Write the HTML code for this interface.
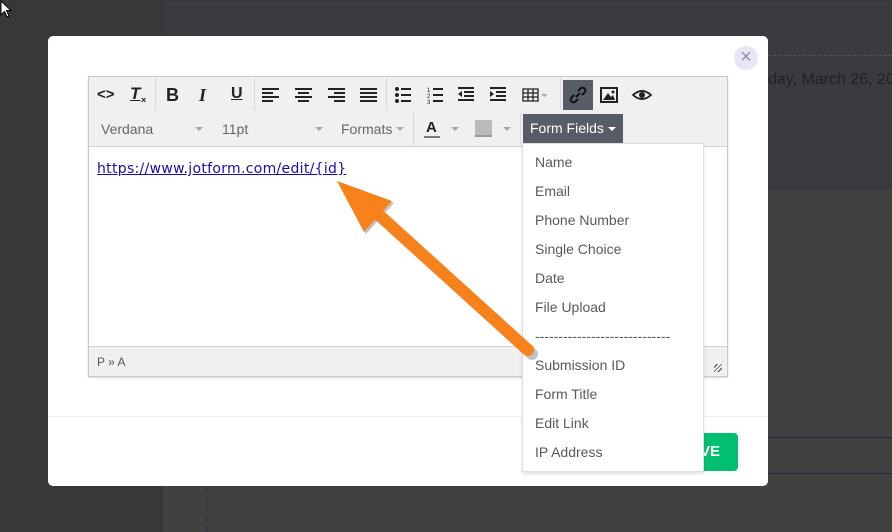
<!DOCTYPE html>
<html><head><meta charset="utf-8"><style>
*{margin:0;padding:0;box-sizing:border-box}
body{width:892px;height:532px;overflow:hidden;background:#383838;position:relative;font-family:"Liberation Sans",Arial,sans-serif}
.a{position:absolute}
.dd{color:#666;font-size:14px}
.item{position:absolute;left:12px;font-size:14px;color:#595959;white-space:nowrap}
.car{position:absolute;width:0;height:0;border-left:4px solid transparent;border-right:4px solid transparent;border-top:4px solid #aaa}
</style></head><body>
<div class="a" style="left:163px;top:1px;width:729px;height:189px;background:#3b3a3f"></div>
<div class="a" style="left:163px;top:190px;width:729px;height:342px;background:#414141"></div>
<div class="a" style="left:768px;top:55px;width:124px;border-top:1px dashed #4a5660"></div>
<div class="a" style="left:768px;top:71px;font-size:16px;color:#222;white-space:nowrap">day, March 26, 2020</div>
<div class="a" style="left:768px;top:437px;width:124px;border-top:1px solid #1f2a44"></div>
<div class="a" style="left:768px;top:473px;width:124px;border-top:1px solid #1f2a44"></div>
<div class="a" style="left:206px;top:486px;height:46px;border-left:2px dashed #333a44"></div>
<svg class="a" style="left:0;top:0" width="14" height="20"><path d="M1 1 L1 15 L4.5 11.5 L7 17 L9 16 L6.5 10.5 L11 10.5 Z" fill="#fff" stroke="#000" stroke-width="1"/></svg>

<div class="a" style="left:48px;top:36px;width:720px;height:450px;background:#fff;border-radius:5px"></div>
<div class="a" style="left:734px;top:46px;width:24px;height:24px;border-radius:50%;background:#e6e7f2;color:#8d93b0;font-size:20px;line-height:23px;text-align:center">×</div>
<div class="a" style="left:48px;top:416px;width:720px;border-top:1px solid #eee"></div>
<div class="a" style="left:640px;top:433px;width:98px;height:38px;background:#00c06f;border-radius:4px;color:#fff;font-weight:bold;font-size:15px;line-height:38px;text-align:right;padding-right:18px">SAVE</div>

<div class="a" style="left:88px;top:76px;width:640px;height:301px;border:1px solid #c9c9c9;background:#f0f0f0;box-shadow:0 1px 2px rgba(0,0,0,.15)"></div>
<div class="a" style="left:89px;top:146px;width:638px;height:201px;background:#fff;border-top:1px solid #d0d0d0;border-bottom:1px solid #d0d0d0"></div>
<div class="a" style="left:97px;top:355px;font-size:12px;color:#555">P » A</div>
<div class="a" style="left:714px;top:364px;width:8px;height:8px;background:repeating-linear-gradient(135deg,transparent 0 2px,#444 2px 3px)"></div>
<div class="a" style="left:155px;top:78px;height:32px;border-left:1px solid #d9d9d9"></div>
<div class="a" style="left:254px;top:78px;height:32px;border-left:1px solid #d9d9d9"></div>
<div class="a" style="left:386px;top:78px;height:32px;border-left:1px solid #d9d9d9"></div>
<div class="a" style="left:560px;top:78px;height:32px;border-left:1px solid #d9d9d9"></div>
<div class="a" style="left:413px;top:113px;height:32px;border-left:1px solid #d9d9d9"></div>
<div class="a" style="left:520px;top:113px;height:32px;border-left:1px solid #d9d9d9"></div>

<div class="a" style="left:97px;top:86px;font-size:15px;font-weight:bold;color:#222">&lt;&gt;</div>
<div class="a" style="left:130px;top:84px;font-size:17px;font-style:italic;font-weight:bold;color:#222;text-decoration:underline">T</div><div class="a" style="left:141px;top:95px;font-size:9px;font-weight:bold;color:#222">×</div>
<div class="a" style="left:166px;top:85px;font-size:18px;font-weight:bold;color:#222">B</div>
<div class="a" style="left:199px;top:85px;font-size:18px;font-style:italic;font-weight:bold;color:#222;font-family:'Liberation Serif',serif">I</div>
<div class="a" style="left:231px;top:85px;font-size:16px;font-weight:bold;color:#222;text-decoration:underline">U</div>
<svg class="a" style="left:262px;top:87px" width="120" height="16" fill="#222">
<rect x="0" y="1" width="17" height="2"/><rect x="0" y="5" width="11" height="2"/><rect x="0" y="9" width="17" height="2"/><rect x="0" y="13" width="11" height="2"/>
<rect x="33" y="1" width="17" height="2"/><rect x="36" y="5" width="11" height="2"/><rect x="33" y="9" width="17" height="2"/><rect x="36" y="13" width="11" height="2"/>
<rect x="66" y="1" width="17" height="2"/><rect x="72" y="5" width="11" height="2"/><rect x="66" y="9" width="17" height="2"/><rect x="72" y="13" width="11" height="2"/>
<rect x="98" y="1" width="17" height="2"/><rect x="98" y="5" width="17" height="2"/><rect x="98" y="9" width="17" height="2"/><rect x="98" y="13" width="17" height="2"/>
</svg>
<svg class="a" style="left:394px;top:86px" width="160" height="18" fill="#222">
<circle cx="3" cy="3" r="2"/><circle cx="3" cy="9" r="2"/><circle cx="3" cy="15" r="2"/><rect x="7" y="2" width="10" height="2"/><rect x="7" y="8" width="10" height="2"/><rect x="7" y="14" width="10" height="2"/>
<text x="33" y="6" font-size="6" font-family="Liberation Sans">1</text><text x="33" y="12" font-size="6">2</text><text x="33" y="18" font-size="6">3</text><rect x="39" y="2" width="10" height="2"/><rect x="39" y="8" width="10" height="2"/><rect x="39" y="14" width="10" height="2"/>
<rect x="64" y="1" width="16" height="2"/><rect x="70" y="5" width="10" height="2"/><rect x="70" y="9" width="10" height="2"/><rect x="64" y="13" width="16" height="2"/><path d="M64 8 L68 5 L68 11Z"/>
<rect x="96" y="1" width="16" height="2"/><rect x="102" y="5" width="10" height="2"/><rect x="102" y="9" width="10" height="2"/><rect x="96" y="13" width="16" height="2"/><path d="M100 8 L96 5 L96 11Z"/>
<path d="M129 3h15v12h-15z M129 7h15 M129 11h15 M134 3v12 M139 3v12" fill="none" stroke="#222" stroke-width="1.3"/>
<path d="M147 8h7l-3.5 3z" fill="#aaa"/>
</svg>
<div class="a" style="left:563px;top:80px;width:30px;height:30px;background:#575d67"></div>
<svg class="a" style="left:568px;top:85px" width="20" height="20"><path d="M8 12 L12 8 M6 10 L3.5 12.5 a2.5 2.5 0 0 0 4 4 L10 14 M10 6 L12.5 3.5 a2.5 2.5 0 0 1 4 4 L14 10" stroke="#111" stroke-width="2" fill="none"/></svg>
<svg class="a" style="left:600px;top:87px" width="60" height="16"><rect x="1" y="1" width="16" height="14" fill="none" stroke="#222" stroke-width="2"/><path d="M3 13 L8 6 L11 10 L13 8 L15 13Z" fill="#222"/><circle cx="13" cy="5" r="1.5" fill="#222"/>
<path d="M33 8 Q42 0 51 8 Q42 16 33 8Z" fill="none" stroke="#222" stroke-width="1.8"/><circle cx="42" cy="8" r="3" fill="#222"/></svg>

<div class="a dd" style="left:101px;top:121px">Verdana</div><div class="car" style="left:195px;top:127px"></div>
<div class="a dd" style="left:222px;top:121px">11pt</div><div class="car" style="left:315px;top:127px"></div>
<div class="a dd" style="left:341px;top:121px">Formats</div><div class="car" style="left:396px;top:127px"></div>
<div class="a" style="left:426px;top:119px;font-size:15px;font-weight:bold;color:#222">A</div><div class="a" style="left:424px;top:136px;width:16px;height:2px;background:#777"></div><div class="car" style="left:451px;top:127px"></div>
<div class="a" style="left:475px;top:120px;width:17px;height:17px;background:#bbb;border-bottom:2px solid #999"></div><div class="car" style="left:503px;top:127px"></div>
<div class="a" style="left:523px;top:114px;width:100px;height:29px;background:#575d67;color:#fff;font-size:14px;line-height:29px;padding-left:7px">Form Fields</div>
<div class="car" style="left:608px;top:127px;border-top-color:#fff"></div>

<div class="a" style="left:97px;top:161px;font-family:'DejaVu Sans',Verdana,sans-serif;font-size:14px;color:#1a0dab;text-decoration:underline;letter-spacing:0.3px;white-space:nowrap">https://www.jotform.com/edit/{id}</div>

<div class="a" style="left:522px;top:143px;width:182px;height:329px;background:#fff;border:1px solid #ddd;box-shadow:0 2px 3px rgba(0,0,0,.12)">
<div class="item" style="top:10px">Name</div>
<div class="item" style="top:39px">Email</div>
<div class="item" style="top:68px">Phone Number</div>
<div class="item" style="top:97px">Single Choice</div>
<div class="item" style="top:126px">Date</div>
<div class="item" style="top:155px">File Upload</div>
<div class="item" style="top:184px;letter-spacing:0">-----------------------------</div>
<div class="item" style="top:213px">Submission ID</div>
<div class="item" style="top:242px">Form Title</div>
<div class="item" style="top:271px">Edit Link</div>
<div class="item" style="top:300px">IP Address</div>
</div>

<svg class="a" style="left:0;top:0" width="892" height="532">
<g transform="translate(2,2)" fill="#999" opacity=".6"><path d="M378 214 L530 352" stroke="#999" stroke-width="12" stroke-linecap="round"/><path d="M337 181 L392 201 L364 232Z"/></g>
<path d="M378 214 L528 350" stroke="#f7821b" stroke-width="12" stroke-linecap="round"/>
<path d="M337 181 L392 201 L364 232Z" fill="#f7821b"/>
</svg>
</body></html>
